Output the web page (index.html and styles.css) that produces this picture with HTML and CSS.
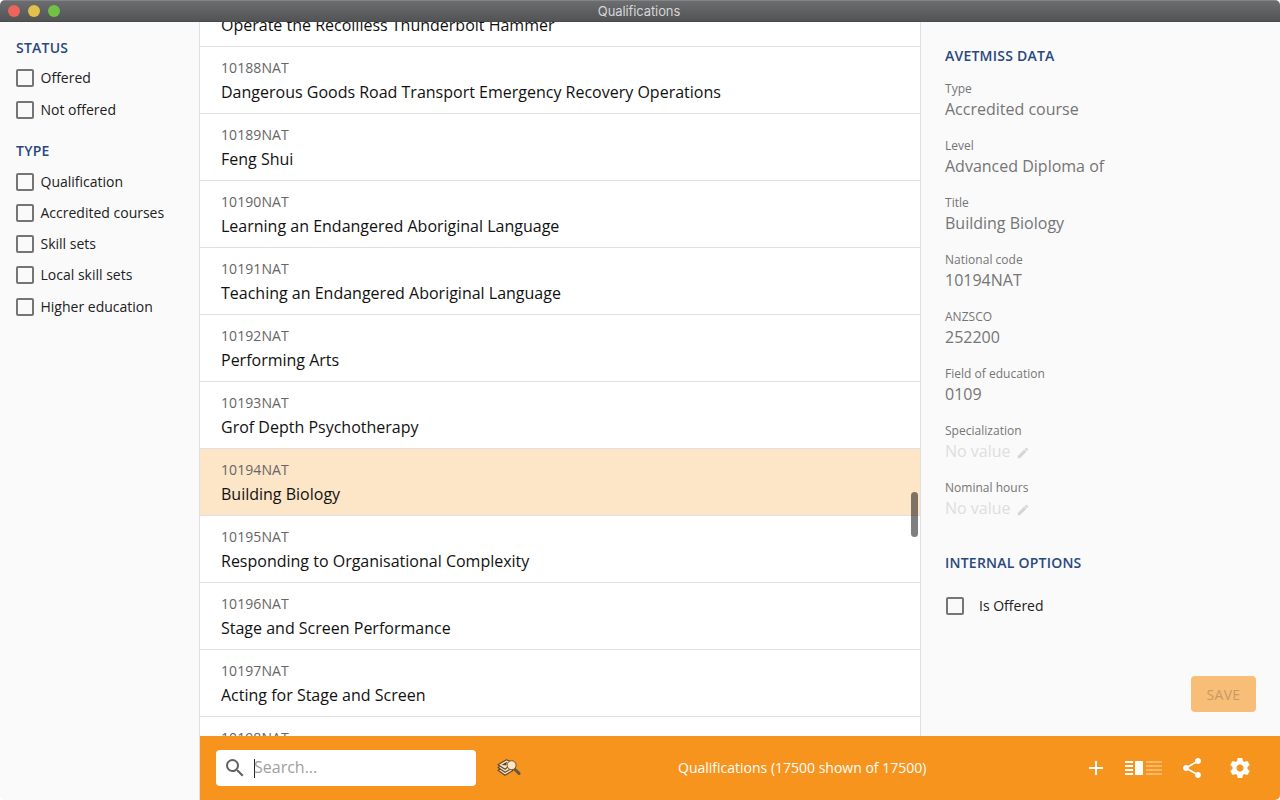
FILE: index.html
```html
<!DOCTYPE html>
<html lang="en">
<head>
<meta charset="utf-8">
<title>Qualifications</title>
<link rel="stylesheet" href="styles.css">
</head>
<body>
<div class="window">
  <header class="titlebar">
    <div class="lights"><i class="light red"></i><i class="light yellow"></i><i class="light green"></i></div>
    <span class="window-title">Qualifications</span>
  </header>
  <div class="body">
    <aside class="filters">
      <h2 class="heading">STATUS</h2>
      <div class="checks status">
        <label class="check"><span class="box"></span><span class="label">Offered</span></label>
        <label class="check"><span class="box"></span><span class="label">Not offered</span></label>
      </div>
      <h2 class="heading">TYPE</h2>
      <div class="checks">
        <label class="check"><span class="box"></span><span class="label">Qualification</span></label>
        <label class="check"><span class="box"></span><span class="label">Accredited courses</span></label>
        <label class="check"><span class="box"></span><span class="label">Skill sets</span></label>
        <label class="check"><span class="box"></span><span class="label">Local skill sets</span></label>
        <label class="check last"><span class="box"></span><span class="label">Higher education</span></label>
      </div>
    </aside>
    <div class="content">
      <div class="panes">
        <main class="list">
          <div class="rows">
            <div class="row partial"><div class="name">Operate the Recoilless Thunderbolt Hammer</div></div>
            <div class="row"><div class="code">10188NAT</div><div class="name">Dangerous Goods Road Transport Emergency Recovery Operations</div></div>
            <div class="row"><div class="code">10189NAT</div><div class="name">Feng Shui</div></div>
            <div class="row"><div class="code">10190NAT</div><div class="name">Learning an Endangered Aboriginal Language</div></div>
            <div class="row"><div class="code">10191NAT</div><div class="name">Teaching an Endangered Aboriginal Language</div></div>
            <div class="row"><div class="code">10192NAT</div><div class="name">Performing Arts</div></div>
            <div class="row"><div class="code">10193NAT</div><div class="name">Grof Depth Psychotherapy</div></div>
            <div class="row selected"><div class="code">10194NAT</div><div class="name">Building Biology</div></div>
            <div class="row"><div class="code">10195NAT</div><div class="name">Responding to Organisational Complexity</div></div>
            <div class="row"><div class="code">10196NAT</div><div class="name">Stage and Screen Performance</div></div>
            <div class="row"><div class="code">10197NAT</div><div class="name">Acting for Stage and Screen</div></div>
            <div class="row"><div class="code">10198NAT</div></div>
          </div>
          <div class="scroll-thumb"></div>
        </main>
        <section class="details">
          <h2 class="heading">AVETMISS DATA</h2>
          <dl class="fields">
            <div class="field"><dt>Type</dt><dd>Accredited course</dd></div>
            <div class="field"><dt>Level</dt><dd>Advanced Diploma of</dd></div>
            <div class="field"><dt>Title</dt><dd>Building Biology</dd></div>
            <div class="field"><dt>National code</dt><dd>10194NAT</dd></div>
            <div class="field"><dt>ANZSCO</dt><dd>252200</dd></div>
            <div class="field"><dt>Field of education</dt><dd>0109</dd></div>
            <div class="field"><dt>Specialization</dt><dd class="empty">No value<svg class="pencil" viewBox="0 0 24 24"><path d="M3 17.25V21h3.75L17.81 9.94l-3.75-3.75L3 17.25zM20.71 7.04a1 1 0 0 0 0-1.41l-2.34-2.34a1 1 0 0 0-1.41 0l-1.83 1.83 3.75 3.75 1.83-1.83z"/></svg></dd></div>
            <div class="field"><dt>Nominal hours</dt><dd class="empty">No value<svg class="pencil" viewBox="0 0 24 24"><path d="M3 17.25V21h3.75L17.81 9.94l-3.75-3.75L3 17.25zM20.71 7.04a1 1 0 0 0 0-1.41l-2.34-2.34a1 1 0 0 0-1.41 0l-1.83 1.83 3.75 3.75 1.83-1.83z"/></svg></dd></div>
          </dl>
          <h2 class="heading">INTERNAL OPTIONS</h2>
          <label class="check offered"><span class="box"></span><span class="label">Is Offered</span></label>
          <button class="save" disabled>SAVE</button>
        </section>
      </div>
      <footer class="toolbar">
        <div class="search">
          <svg class="icon search-icon" viewBox="0 0 24 24"><path d="M15.5 14h-.79l-.28-.27A6.47 6.47 0 0 0 16 9.5 6.5 6.5 0 1 0 9.5 16c1.61 0 3.09-.59 4.23-1.57l.27.28v.79l5 4.99L20.49 19l-4.99-5zm-6 0C7.01 14 5 11.99 5 9.5S7.01 5 9.5 5 14 7.01 14 9.5 11.99 14 9.5 14z"/></svg>
          <span class="caret"></span><span class="placeholder">Search...</span>
        </div>
        <svg class="find-related" viewBox="0 0 24 20">
          <g fill="#fbe0b8" stroke="#5b4930" stroke-width="1.1" stroke-linejoin="round">
            <path d="M1 12.3 8 17.2 16 12.5 10 8z"/>
            <path d="M1 9.5 8 14.3 16 9.6 10 5z"/>
            <path d="M1 6.7 9.5 1.7 16 5 8 11.3z"/>
          </g>
          <path d="M4.5 7 10 3.8 9 7.2z" fill="#4b3c2a"/>
          <path d="m18 11.5 4 3.9" stroke="#66583f" stroke-width="3" stroke-linecap="round"/>
          <circle cx="14.6" cy="7.2" r="4.5" fill="#ffe5c3" stroke="#6b5433" stroke-width="1"/>
        </svg>
        <span class="summary">Qualifications (17500 shown of 17500)</span>
        <div class="actions">
          <svg class="icon plus" viewBox="0 0 24 24"><path d="M19 13h-6v6h-2v-6H5v-2h6V5h2v6h6v2z"/></svg>
          <svg class="layout-icon" viewBox="0 0 38 14"><path d="M0 0h8v2H0zM0 4h8v2H0zM0 8h8v2H0zM0 12h8v2H0zM10 0h8v14h-8z"/><path opacity=".35" d="M21 0h16v2H21zM21 4h16v2H21zM21 8h16v2H21zM21 12h16v2H21z"/></svg>
          <svg class="icon share" viewBox="0 0 24 24"><path d="M18 16.08c-.76 0-1.44.3-1.96.77L8.91 12.7c.05-.23.09-.46.09-.7s-.04-.47-.09-.7l7.05-4.11c.54.5 1.25.81 2.04.81 1.66 0 3-1.34 3-3s-1.34-3-3-3-3 1.34-3 3c0 .24.04.47.09.7L8.04 9.81C7.5 9.31 6.79 9 6 9c-1.66 0-3 1.34-3 3s1.34 3 3 3c.79 0 1.5-.31 2.04-.81l7.12 4.16c-.05.21-.08.43-.08.65 0 1.61 1.31 2.92 2.92 2.92s2.92-1.31 2.92-2.92-1.31-2.92-2.92-2.92z"/></svg>
          <svg class="icon gear" viewBox="0 0 24 24"><path d="M19.43 12.98c.04-.32.07-.64.07-.98s-.03-.66-.07-.98l2.11-1.65c.19-.15.24-.42.12-.64l-2-3.46c-.12-.22-.39-.3-.61-.22l-2.49 1c-.52-.4-1.08-.73-1.69-.98l-.38-2.65A.488.488 0 0 0 14 2h-4c-.25 0-.46.18-.49.42l-.38 2.65c-.61.25-1.17.59-1.69.98l-2.49-1c-.23-.09-.49 0-.61.22l-2 3.46c-.13.22-.07.49.12.64l2.11 1.65c-.04.32-.07.65-.07.98s.03.66.07.98l-2.11 1.65c-.19.15-.24.42-.12.64l2 3.46c.12.22.39.3.61.22l2.49-1c.52.4 1.08.73 1.69.98l.38 2.65c.03.24.24.42.49.42h4c.25 0 .46-.18.49-.42l.38-2.65c.61-.25 1.17-.59 1.69-.98l2.49 1c.23.09.49 0 .61-.22l2-3.46c.12-.22.07-.49-.12-.64l-2.11-1.65zM12 15.5c-1.93 0-3.5-1.57-3.5-3.5s1.57-3.5 3.5-3.5 3.5 1.57 3.5 3.5-1.57 3.5-3.5 3.5z"/></svg>
        </div>
      </footer>
    </div>
  </div>
</div>
</body>
</html>
```
FILE: styles.css
```css
* { box-sizing: border-box; }
body { margin: 0; background: #fff; font-family: "Open Sans", sans-serif; color: #212121; }
.window { width: 1280px; height: 800px; display: flex; flex-direction: column; overflow: hidden; border-radius: 5px; background: #fafafa; white-space: nowrap; }

.titlebar { height: 22px; flex: none; display: grid; grid-template-columns: 80px 1fr 82px; align-items: center; background: linear-gradient(#6b6d6f, #525355); border-top: 1px solid #828485; border-bottom: 1px solid #494a4b; }
.lights { display: flex; gap: 8px; padding-left: 8px; }
.light { width: 12px; height: 12px; border-radius: 50%; }
.red { background: #ed6559; }
.yellow { background: #e1c04c; }
.green { background: #71c147; }
.window-title { text-align: center; font: 13px/20px Inter, sans-serif; letter-spacing: -.1px; color: #d5d6d7; }

.body { flex: 1; min-height: 0; display: flex; }
.heading { margin: 0; font-size: 14px; line-height: 20px; font-weight: 600; color: #29487d; letter-spacing: .23px; }
.filters { width: 200px; flex: none; padding: 16px 0 0 16px; border-right: 1px solid #e0e0e0; }
.checks { display: flex; flex-direction: column; gap: 13px; padding-top: 12px; }
.status { gap: 14px; padding: 11px 0 22px; }
.check { display: flex; align-items: center; gap: 6.5px; height: 18px; font-size: 14px; }
.last { margin-top: 1px; }
.label { line-height: 18px; }
.box { width: 18px; height: 18px; flex: none; border: 2px solid #757575; border-radius: 2px; }

.content { flex: 1; min-width: 0; display: flex; flex-direction: column; }
.panes { flex: 1; min-height: 0; display: flex; }
.list { width: 720px; flex: none; position: relative; overflow: hidden; background: #fff; }
.rows { margin-top: -10px; }
.row { height: 67px; padding: 10px 21px 0; border-bottom: 1px solid #e0e0e0; }
.partial { height: 35px; padding-top: 0; }
.selected { background: #fde5c8; }
.code { font-size: 14px; line-height: 22px; font-weight: 500; color: #666; letter-spacing: .08px; }
.name { font-size: 16px; line-height: 24px; padding-top: 1px; color: #111; }
.scroll-thumb { position: absolute; left: 711px; top: 470px; width: 7px; height: 45px; border-radius: 4px; background: rgba(0, 0, 0, .5); }

.details { flex: 1; display: flex; flex-direction: column; padding: 24px 24px; border-left: 1px solid #e0e0e0; }
.fields { margin: 0; padding: 13px 0 18px; }
.field { height: 57px; }
.field dt { font-size: 12px; line-height: 20px; color: #757575; letter-spacing: .02px; }
.field dd { margin: 0; font-size: 16px; line-height: 20px; color: #757575; display: flex; align-items: center; }
.field .empty { color: #dedede; }
.pencil { width: 14px; height: 14px; margin: 3px 0 0 5px; fill: #d5d5d5; }
.offered { margin: 24px 0 0 1px; gap: 15px; }
.save { margin-top: auto; align-self: flex-end; width: 65px; height: 36px; padding: 0; border: 0; border-radius: 4px; background: #f8be78; color: #c59a64; font: 500 14px "Open Sans", sans-serif; letter-spacing: .3px; }

.toolbar { height: 64px; flex: none; display: flex; align-items: center; padding: 0 28px 0 16px; background: #f7941d; }
.search { width: 260px; height: 36px; flex: none; display: flex; align-items: center; padding-left: 7px; background: #fff; border-radius: 4px; }
.icon { width: 24px; height: 24px; fill: #fff; flex: none; }
.search .search-icon { fill: #616161; }
.caret { width: 1px; height: 19px; margin-left: 7px; background: #222; }
.placeholder { font-size: 16px; color: #9e9e9e; margin-left: -1px; padding-bottom: 2px; }
.find-related { width: 24px; height: 20px; margin-left: 21px; flex: none; fill: none; }
.summary { margin-left: 157px; padding-bottom: 2px; font-size: 14px; color: #fff; }
.actions { margin-left: auto; display: flex; align-items: center; }
.plus { margin-right: 17px; }
.layout-icon { width: 38px; height: 14px; margin-right: 17px; fill: #fff; }
.share { margin-right: 24px; }
```
